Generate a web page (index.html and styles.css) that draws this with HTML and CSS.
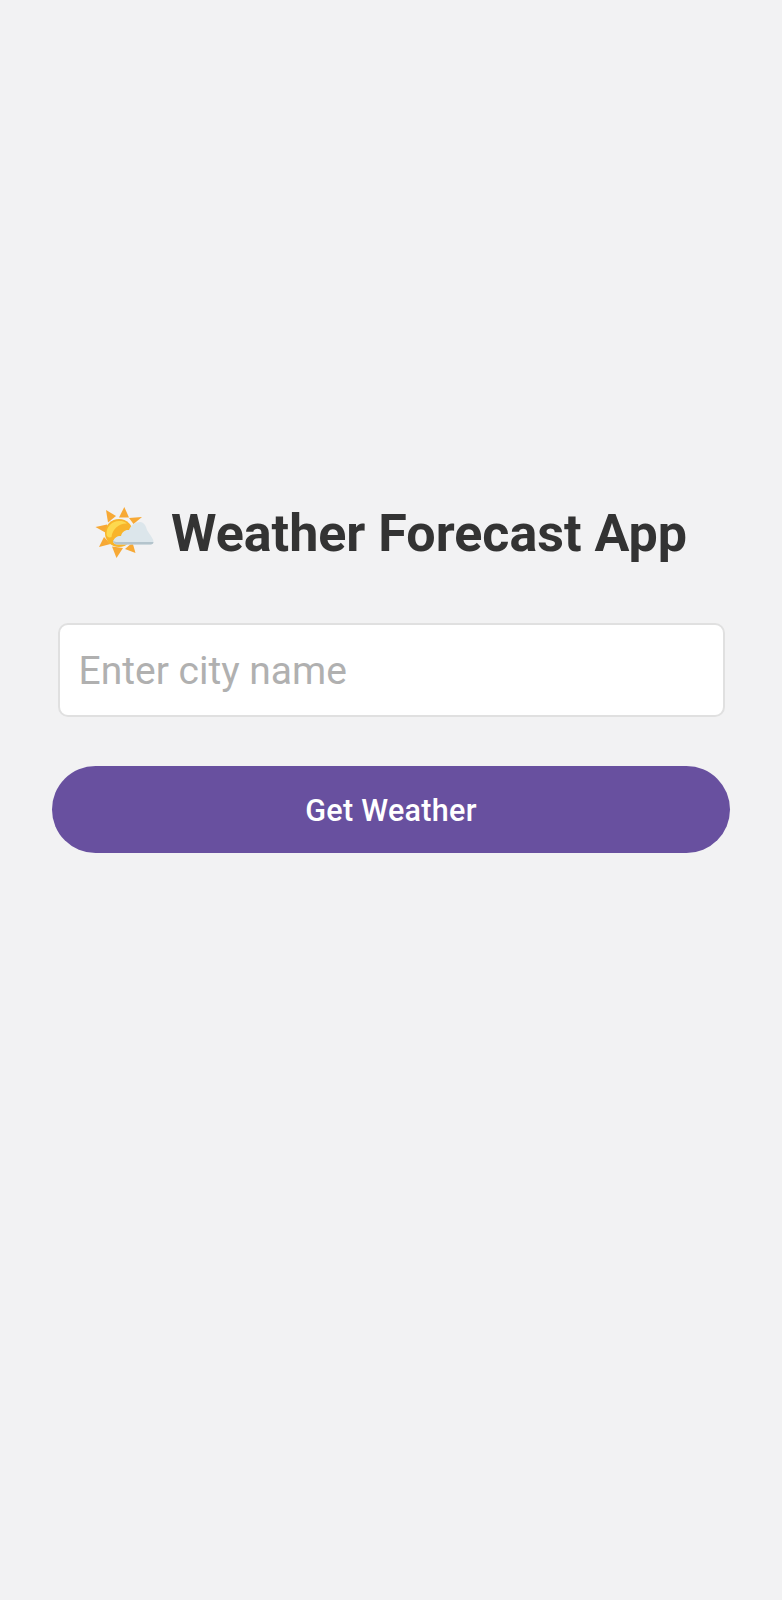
FILE: index.html
```html
<!DOCTYPE html>
<html lang="en">
<head>
    <meta charset="UTF-8">
    <meta name="viewport" content="width=device-width, initial-scale=1.0">
    <title>Weather Forecast App</title>
    <link rel="stylesheet" href="styles.css">
</head>
<body>

<div class="container">
    <h1 class="title">
        <!-- sun behind cloud -->
        <svg class="title-icon" viewBox="0 0 60 54" aria-hidden="true">
            <g fill="#f7a935">
                <polygon points="11,3 21,9 13,15.500"/>
                <polygon points="29.300,0 34,10.500 24,10.500"/>
                <polygon points="47,10 38.500,17 34,11"/>
                <polygon points="0.500,20 12,17.500 12,26.500"/>
                <polygon points="4,40 9,30 15.500,37"/>
                <polygon points="21.500,51 17,39.500 28,41"/>
                <polygon points="40.500,46 30,42 37.500,35.500"/>
            </g>
            <circle cx="24" cy="26" r="14" fill="#f8b42a"/>
            <path d="M11.500 27a12.500 12.500 0 0 1 13-13c3 0 5 .5 7.500 2.500-7.500-.500-14.500 5-15.500 13.500-2.500 1-5 0-5-3z" fill="#fdd94f"/>
            <path d="M18 34c2-4 5-5.500 8-5 1-4 4-6.500 8-6 2-5 6-8 11-8 4 0 6 4 7 8 2 4 5.500 7 6.500 11 0 2.500-1 3.500-3 3.500H22c-2 0-4-1.500-4-3.500z" fill="#dce6eb"/>
            <path d="M18 33.500c1 1 3 1.500 5 1.500h35.400c.2 1.500-.9 2.500-2.900 2.500H22c-2 0-4-2-4-4z" fill="#b4c4cc"/>
        </svg>
        <span>Weather Forecast App</span>
    </h1>
    <input class="city-input" type="text" placeholder="Enter city name">
    <button class="get-btn"><span>Get Weather</span></button>
</div>

</body>
</html>
```

FILE: styles.css
```css
body {
    font-family: Roboto, "Noto Sans", sans-serif;
    margin: 0;
    padding: 0;
    background-color: #f2f2f3;
}
.container {
    height: 1600px;
    box-sizing: border-box;
    padding: 502px 52px 0;
    display: flex;
    flex-direction: column;
    align-items: center;
}
.title {
    display: flex;
    align-items: center;
    gap: 16px;
    margin: 0 0 58px;
    height: 63px;
    font-size: 52px;
    font-weight: 700;
    color: #333;
    white-space: nowrap;
}
.title-icon {
    width: 60px;
    height: 54px;
}
.city-input {
    box-sizing: border-box;
    width: 667px;
    height: 94px;
    padding: 2px 19px 0;
    border: 2.5px solid #e0e0e0;
    border-radius: 10px;
    background-color: #fff;
    font-family: inherit;
    font-size: 39px;
    color: #333;
    outline: none;
}
.city-input::placeholder {
    color: #b0b0b0;
}
.get-btn {
    width: 678px;
    height: 87px;
    margin-top: 49px;
    padding: 2px 0 0;
    border: none;
    border-radius: 44px;
    background-color: #68509f;
    color: #fff;
    font-family: inherit;
    font-size: 30.500px;
    font-weight: 500;
    letter-spacing: 0.3px;
    cursor: pointer;
}
```
